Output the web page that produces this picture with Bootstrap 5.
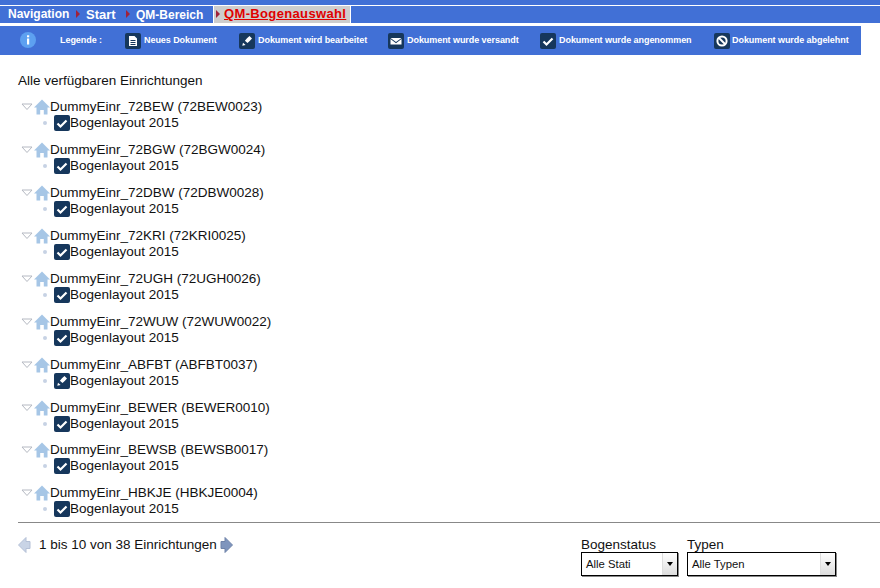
<!DOCTYPE html>
<html lang="de"><head><meta charset="utf-8"><title>QM</title>
<link href="https://cdn.jsdelivr.net/npm/bootstrap@5.3.0/dist/css/bootstrap.min.css" rel="stylesheet">
<style>
html,body{height:588px;overflow:hidden}
body{font-family:"Liberation Sans",Arial,sans-serif;font-size:13.5px;color:#111;background:#fff;line-height:16px}
.crumbbar{background:#4170d6;height:23px;padding-top:5px}
.crumbrow{border-top:1px solid #fff;height:18px;color:#fff;font-weight:700;font-size:12px;white-space:nowrap}
.crumbitem{padding-top:1px;height:17px}
.crumbnav{margin-left:8px;width:68px;margin-top:-1px}
.crumbstart{width:40px;font-size:13px}
.crumbqm{width:77px}
.crumbcur{background:#cdcdcd;border:1px solid #fff;border-top:0;border-bottom:0;height:17px;padding-left:2px;width:138px;color:#e00000;text-decoration:underline;font-size:13px;letter-spacing:.35px}
.tri{width:0;height:0;border-left:4px solid #a0223a;border-top:4px solid transparent;border-bottom:4px solid transparent;margin:4px 6px 0 0;flex:none}
.tri-c{margin-right:4px}
.legendbar{background:#4170d6;width:861px;height:29px;margin-top:3px;padding-bottom:1px;color:#fff;font-size:9px;font-weight:700;white-space:nowrap;letter-spacing:-.06px}
.legendinfo{margin-left:20px;margin-right:24px;flex:none}
.legendlabel{width:65px}
.legenditem{gap:3px}
.legenditem .icobox{margin-top:1px}
.lg-new{width:114px}.lg-edit{width:149px}.lg-mail{width:152px}.lg-ok{width:174px}.lg-no{gap:2px}
.icobox{width:16px;height:16px;background:#16375c;border-radius:2px;display:flex;align-items:center;justify-content:center;flex:none}
.pagemain{padding:0 0 0 18px}
.headline{margin-top:18px;height:16px;line-height:16px}
.treewrap{margin-top:9px}
.treegroup{height:43px}
.treegroup:nth-child(8){height:42px}
.treehead{height:17px;margin-left:3px}
.treetoggle{margin-right:1px;flex:none}
.treesub{margin-left:25px;height:17px;margin-top:-1px}
.dotmark{width:4px;height:4px;border-radius:50%;background:#c7d2e4;margin-right:7px;flex:none}
.rule{border-top:1px solid #888;margin-top:-5px;height:0}
.footrow{margin-top:13px}
.fieldlabel{line-height:15px;height:15px}
.selectbox{border:1px solid #000;height:24px;display:flex;align-items:center;font-size:11.3px;padding-left:4px;justify-content:space-between;box-shadow:1px 1px 0 #888}
.selarrow{width:15px;height:22px;background:linear-gradient(#fff,#ddd);border-left:1px solid #ddd;display:flex;align-items:center;justify-content:center}
.selarrow i{display:block;width:0;height:0;border-top:4px solid #000;border-left:3px solid transparent;border-right:3px solid transparent}
.statussel{width:97px}.typesel{width:149px}
.fieldcol{margin-right:9px}
.pagerbox{width:214px;flex:none;padding-top:1px}
.pagertext{white-space:nowrap}
.pagerprev{margin-right:8px;flex:none}
.pagernext{margin-left:3px;flex:none}
.filters{margin-left:349px;margin-top:1px}
</style></head><body>
<svg width="0" height="0" class="d-none" aria-hidden="true"><defs>
<symbol id="i-check" viewBox="0 0 16 16"><path d="M3.5 8.5 6.5 11.5 12.5 5.5" fill="none" stroke="#fff" stroke-width="2.2"/></symbol>
<symbol id="i-edit" viewBox="0 0 16 16"><path d="M8 5.2 10.500 3l2.500 2.400-2.300 2.600-2.200 2.100-2.600-2.400zM3.300 12.800l.7-3 2.600 2.300z" fill="#fff"/></symbol>
<symbol id="i-doc" viewBox="0 0 16 16"><path d="M4 3h5.500L12 5.500V13H4zM5.500 7v1h5V7zm0 2v1h5V9zm0 2v1h5v-1z" fill="#fff" fill-rule="evenodd"/></symbol>
<symbol id="i-mail" viewBox="0 0 16 16"><path d="M2.500 5h11L8 9zM2.500 6 8 10.200 13.500 6v5.500h-11z" fill="#fff"/></symbol>
<symbol id="i-ban" viewBox="0 0 16 16"><circle cx="8" cy="8" r="4.600" fill="none" stroke="#fff" stroke-width="2"/><path d="M5 5l6 6" stroke="#fff" stroke-width="2"/></symbol>
<symbol id="i-house" viewBox="0 0 16 16"><path d="M8 .5 16 8.500h-2.500v7h-3.700v-4.500H6.200v4.500H2.500v-7H0z" fill="#a6c6e6"/></symbol>
<symbol id="i-open" viewBox="0 0 12 8"><path d="M1 1h10L6 6.500z" fill="#fff" stroke="#b5b9c2"/></symbol>
</defs></svg>
<nav class="crumbbar"><div class="crumbrow d-flex">
<div class="crumbitem crumbnav">Navigation</div><span class="tri"></span>
<div class="crumbitem crumbstart">Start</div><span class="tri"></span>
<div class="crumbitem crumbqm">QM-Bereich</div>
<div class="crumbcur d-flex"><span class="tri tri-c"></span><span>QM-Bogenauswahl</span></div>
</div></nav>
<div class="legendbar d-flex align-items-center">
<svg class="legendinfo" width="16" height="16" viewBox="0 0 16 16"><circle cx="8" cy="8" r="8" fill="#5da0f0"/><rect x="7" y="6.500" width="2.200" height="6" fill="#fff"/><rect x="7" y="3.300" width="2.200" height="2" fill="#fff"/></svg>
<span class="legendlabel">Legende :</span>
<div class="legenditem lg-new d-flex align-items-center"><span class="icobox"><svg width="16" height="16"><use href="#i-doc"/></svg></span>Neues Dokument</div>
<div class="legenditem lg-edit d-flex align-items-center"><span class="icobox"><svg width="16" height="16"><use href="#i-edit"/></svg></span>Dokument wird bearbeitet</div>
<div class="legenditem lg-mail d-flex align-items-center"><span class="icobox"><svg width="16" height="16"><use href="#i-mail"/></svg></span>Dokument wurde versandt</div>
<div class="legenditem lg-ok d-flex align-items-center"><span class="icobox"><svg width="16" height="16"><use href="#i-check"/></svg></span>Dokument wurde angenommen</div>
<div class="legenditem lg-no d-flex align-items-center"><span class="icobox"><svg width="16" height="16"><use href="#i-ban"/></svg></span>Dokument wurde abgelehnt</div>
</div>
<main class="pagemain">
<div class="headline">Alle verfügbaren Einrichtungen</div>
<div class="treewrap" id="tree">
<div class="treegroup"><div class="treehead d-flex align-items-center"><svg width="12" height="8" class="treetoggle"><use href="#i-open"/></svg><svg width="16" height="16"><use href="#i-house"/></svg>DummyEinr_72BEW (72BEW0023)</div><div class="treesub d-flex align-items-center"><span class="dotmark"></span><span class="icobox"><svg width="16" height="16"><use href="#i-check"/></svg></span>Bogenlayout 2015</div></div>
<div class="treegroup"><div class="treehead d-flex align-items-center"><svg width="12" height="8" class="treetoggle"><use href="#i-open"/></svg><svg width="16" height="16"><use href="#i-house"/></svg>DummyEinr_72BGW (72BGW0024)</div><div class="treesub d-flex align-items-center"><span class="dotmark"></span><span class="icobox"><svg width="16" height="16"><use href="#i-check"/></svg></span>Bogenlayout 2015</div></div>
<div class="treegroup"><div class="treehead d-flex align-items-center"><svg width="12" height="8" class="treetoggle"><use href="#i-open"/></svg><svg width="16" height="16"><use href="#i-house"/></svg>DummyEinr_72DBW (72DBW0028)</div><div class="treesub d-flex align-items-center"><span class="dotmark"></span><span class="icobox"><svg width="16" height="16"><use href="#i-check"/></svg></span>Bogenlayout 2015</div></div>
<div class="treegroup"><div class="treehead d-flex align-items-center"><svg width="12" height="8" class="treetoggle"><use href="#i-open"/></svg><svg width="16" height="16"><use href="#i-house"/></svg>DummyEinr_72KRI (72KRI0025)</div><div class="treesub d-flex align-items-center"><span class="dotmark"></span><span class="icobox"><svg width="16" height="16"><use href="#i-check"/></svg></span>Bogenlayout 2015</div></div>
<div class="treegroup"><div class="treehead d-flex align-items-center"><svg width="12" height="8" class="treetoggle"><use href="#i-open"/></svg><svg width="16" height="16"><use href="#i-house"/></svg>DummyEinr_72UGH (72UGH0026)</div><div class="treesub d-flex align-items-center"><span class="dotmark"></span><span class="icobox"><svg width="16" height="16"><use href="#i-check"/></svg></span>Bogenlayout 2015</div></div>
<div class="treegroup"><div class="treehead d-flex align-items-center"><svg width="12" height="8" class="treetoggle"><use href="#i-open"/></svg><svg width="16" height="16"><use href="#i-house"/></svg>DummyEinr_72WUW (72WUW0022)</div><div class="treesub d-flex align-items-center"><span class="dotmark"></span><span class="icobox"><svg width="16" height="16"><use href="#i-check"/></svg></span>Bogenlayout 2015</div></div>
<div class="treegroup"><div class="treehead d-flex align-items-center"><svg width="12" height="8" class="treetoggle"><use href="#i-open"/></svg><svg width="16" height="16"><use href="#i-house"/></svg>DummyEinr_ABFBT (ABFBT0037)</div><div class="treesub d-flex align-items-center"><span class="dotmark"></span><span class="icobox"><svg width="16" height="16"><use href="#i-edit"/></svg></span>Bogenlayout 2015</div></div>
<div class="treegroup"><div class="treehead d-flex align-items-center"><svg width="12" height="8" class="treetoggle"><use href="#i-open"/></svg><svg width="16" height="16"><use href="#i-house"/></svg>DummyEinr_BEWER (BEWER0010)</div><div class="treesub d-flex align-items-center"><span class="dotmark"></span><span class="icobox"><svg width="16" height="16"><use href="#i-check"/></svg></span>Bogenlayout 2015</div></div>
<div class="treegroup"><div class="treehead d-flex align-items-center"><svg width="12" height="8" class="treetoggle"><use href="#i-open"/></svg><svg width="16" height="16"><use href="#i-house"/></svg>DummyEinr_BEWSB (BEWSB0017)</div><div class="treesub d-flex align-items-center"><span class="dotmark"></span><span class="icobox"><svg width="16" height="16"><use href="#i-check"/></svg></span>Bogenlayout 2015</div></div>
<div class="treegroup"><div class="treehead d-flex align-items-center"><svg width="12" height="8" class="treetoggle"><use href="#i-open"/></svg><svg width="16" height="16"><use href="#i-house"/></svg>DummyEinr_HBKJE (HBKJE0004)</div><div class="treesub d-flex align-items-center"><span class="dotmark"></span><span class="icobox"><svg width="16" height="16"><use href="#i-check"/></svg></span>Bogenlayout 2015</div></div>
</div>
<div class="rule"></div>
<div class="footrow d-flex align-items-start">
<div class="pagerbox d-flex align-items-center">
<svg width="13" height="16" viewBox="0 0 13 16" class="pagerprev"><path d="M.5 8 8 .5V4.500h4v7H8v4z" fill="#c9d4e6" stroke="#b4c0d6"/></svg>
<span class="pagertext">1 bis 10 von 38 Einrichtungen</span>
<svg width="13" height="16" viewBox="0 0 13 16" class="pagernext"><path d="M12.500 8 5 .5V4.500H1v7h4v4z" fill="#7f95bd" stroke="#6f82a8"/></svg>
</div>
<div class="filters d-flex">
<div class="fieldcol"><div class="fieldlabel">Bogenstatus</div><div class="selectbox statussel"><span>Alle Stati</span><span class="selarrow"><i></i></span></div></div>
<div><div class="fieldlabel">Typen</div><div class="selectbox typesel"><span>Alle Typen</span><span class="selarrow"><i></i></span></div></div>
</div>
</div>
</main>
<script src="https://cdn.jsdelivr.net/npm/bootstrap@5.3.0/dist/js/bootstrap.bundle.min.js"></script>
</body></html>
